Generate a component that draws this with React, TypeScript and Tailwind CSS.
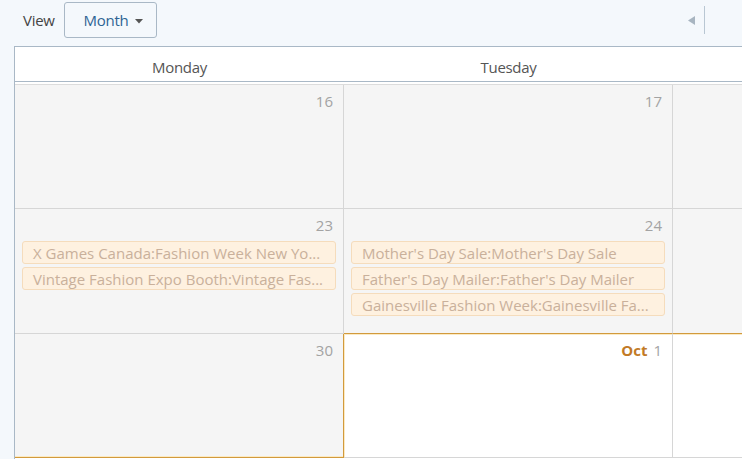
import type { ReactNode } from "react";

type Day = {
  label: ReactNode;
  events?: string[];
  current?: boolean;
};

const ROWS: Day[][] = [
  [{ label: "16" }, { label: "17" }, { label: "18" }],
  [
    {
      label: "23",
      events: ["X Games Canada:Fashion Week New Yo...", "Vintage Fashion Expo Booth:Vintage Fas..."],
    },
    {
      label: "24",
      events: [
        "Mother's Day Sale:Mother's Day Sale",
        "Father's Day Mailer:Father's Day Mailer",
        "Gainesville Fashion Week:Gainesville Fa...",
      ],
    },
    { label: "25" },
  ],
  [{ label: "30" }, { label: "1", current: true }, { label: "2", current: true }],
];

function EventChip({ title }: { title: string }) {
  return (
    <div className="mb-[3px] flex h-[23px] items-center overflow-hidden rounded-[3px] border border-[#f5dcbc] bg-[#fef1e0] pl-[10px] pr-[4px]">
      <span className="whitespace-nowrap text-[15px] leading-[20px] text-[#c9b09b]">{title}</span>
    </div>
  );
}

function Cell({ day, row, col }: { day: Day; row: number; col: number }) {
  // Sep / Oct boundary: gold line under Sep 30 and along the top/left of Oct 1
  const goldBottom = (row === 1 && col >= 1) || (row === 2 && col === 0);
  const goldRight = row === 2 && col === 0;
  const showDay = col < 2;

  return (
    <div
      className={[
        "w-[329px] shrink-0 border-b border-r px-[7px]",
        row === 1 ? "h-[125px]" : "h-[124px]",
        day.current ? "bg-white" : "bg-[#f5f5f5]",
        goldBottom ? "border-b-[#d29a3c]" : "border-b-[#d6d6d6]",
        goldRight ? "border-r-[#d29a3c]" : "border-r-[#d6d6d6]",
        row === 2 && col === 0 ? "shadow-[inset_0_-1px_0_#fbeac4]" : "",
        row === 2 && col === 1 ? "shadow-[inset_1px_1px_0_#fbeac4]" : "",
        row === 2 && col === 2 ? "shadow-[inset_0_1px_0_#fbeac4]" : "",
      ].join(" ")}
    >
      {showDay && (
        <div className="flex h-[32px] items-center justify-end pr-[3px] text-[15px]">
          {day.current && day.label === "1" && (
            <span className="mr-[6px] font-bold text-[#c27a26]">Oct</span>
          )}
          <span className="text-[#a3a3a3]">{day.label}</span>
        </div>
      )}
      {day.events && (
        <div>
          {day.events.map((e) => (
            <EventChip key={e} title={e} />
          ))}
        </div>
      )}
    </div>
  );
}

export default function App() {
  return (
    <div className="flex h-[459px] w-[742px] flex-col overflow-hidden bg-[#f4f8fc] font-['Open_Sans','Liberation_Sans',sans-serif]">
      <div className="flex h-[46px] shrink-0 items-start">
        <span className="ml-[23px] mt-[9px] text-[15px] tracking-[-0.3px] text-[#444]">View</span>
        <button className="ml-[9px] mt-[2px] flex h-[36px] w-[93px] shrink-0 items-center rounded-[3px] border border-[#a9b8c6] bg-[#f4f8fc] pl-[19px]">
          <span className="text-[15px] tracking-[-0.3px] text-[#2e6494]">Month</span>
          <svg width="8" height="5" viewBox="0 0 8 5" className="ml-[7px] mt-[2px]">
            <path d="M0 0h8L4 4.5z" fill="#555" />
          </svg>
        </button>
        <div className="ml-auto mr-[37px] mt-[6px] flex items-center">
          <svg width="8" height="9" viewBox="0 0 8 9">
            <path d="M7 0v9L0 4.5z" fill="#a8b5c1" />
          </svg>
          <div className="ml-[8px] h-[28px] w-px bg-[#b9c7d3]" />
        </div>
      </div>

      <div className="ml-[14px] flex min-w-[1100px] flex-1 flex-col border-l border-t border-[#a9b8c6] bg-white">
        <div className="flex h-[35px] shrink-0 border-b border-[#a9b8c6]">
          {["Monday", "Tuesday"].map((d) => (
            <div key={d} className="flex w-[329px] shrink-0 items-center justify-center pt-[6px] text-[15px] tracking-[-0.3px] text-[#555]">
              {d}
            </div>
          ))}
        </div>
        <div className="h-[2px] shrink-0 bg-white" />
        <div className="border-t border-[#dcdcdc]">
          {ROWS.map((row, r) => (
            <div key={r} className="flex">
              {row.map((day, c) => (
                <Cell key={c} day={day} row={r} col={c} />
              ))}
            </div>
          ))}
        </div>
      </div>
    </div>
  );
}
